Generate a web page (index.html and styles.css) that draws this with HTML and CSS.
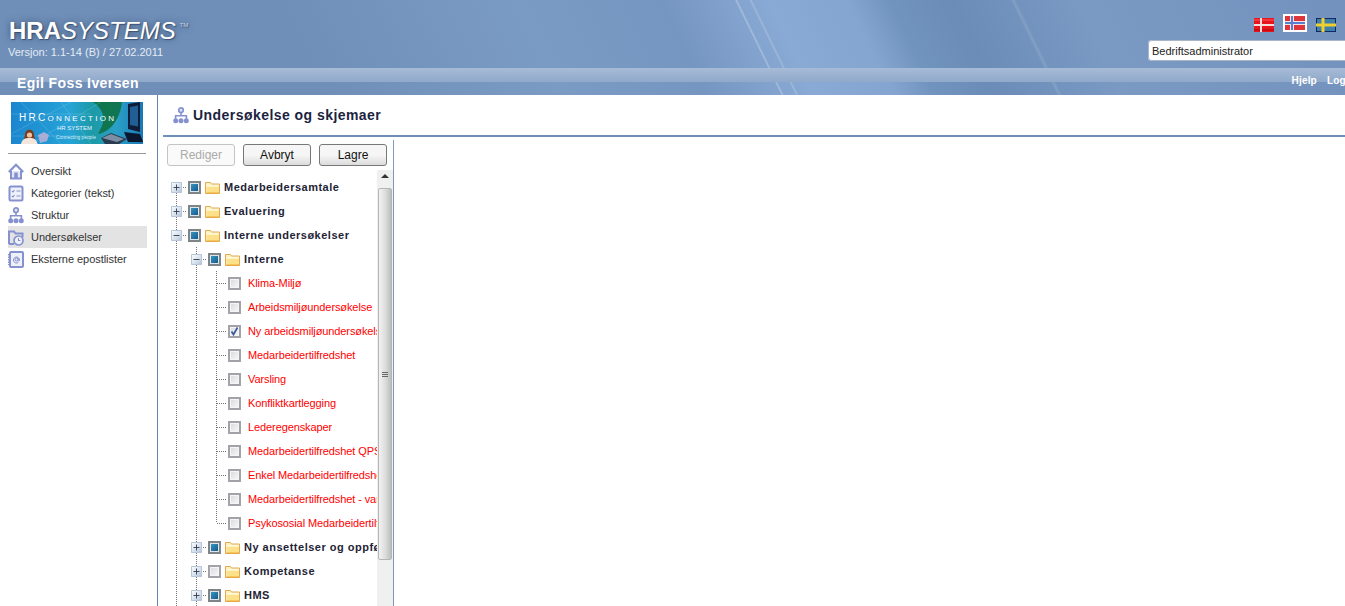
FILE: index.html
```html
<!DOCTYPE html>
<html lang="en">
<head>
  <meta charset="UTF-8">
  <meta name="viewport" content="width=device-width, initial-scale=1.0">
  <title>HRA Systems</title>
  <link rel="stylesheet" href="styles.css">
</head>
<body>
  <!-- shared icons -->
  <svg class="sprites" aria-hidden="true">
    <symbol id="i-org" viewBox="0 0 16 17">
      <circle cx="8" cy="3.200" r="2.300" fill="#dfe2f5" stroke="currentColor" stroke-width="1.700"/>
      <path d="M8 5.500V9M2.600 12V8.800h10.800V12" fill="none" stroke="currentColor" stroke-width="1.600"/>
      <circle cx="2.700" cy="13.800" r="2.500" fill="currentColor"/>
      <circle cx="8" cy="13.800" r="2.500" fill="currentColor"/>
      <circle cx="13.300" cy="13.800" r="2.500" fill="currentColor"/>
    </symbol>
    <symbol id="i-folder" viewBox="0 0 15 13">
      <path d="M.5 12.500V1.500h5l1 1.500h8v9.500z" fill="#fdf3c4" stroke="#e2a94e"/>
      <path d="M1.500 12V5.500h12.500V12z" fill="#fde08a"/>
      <path d="M1.500 5h12.500" stroke="#fffbe6"/>
      <path d="M1.500 11.500h12.500" stroke="#f7c65a"/>
    </symbol>
    <symbol id="i-plus" viewBox="0 0 11 11">
      <path d="M2.500 5.500h6M5.500 2.500v6" stroke="#3c4a5c" stroke-width="1"/>
    </symbol>
    <symbol id="i-minus" viewBox="0 0 11 11">
      <path d="M2.500 5.500h6" stroke="#3c4a5c" stroke-width="1"/>
    </symbol>
  </svg>

  <header class="header">
    <div class="topbar">
      <div class="brand">
        <div class="logo"><b>HRA</b><i>SYSTEMS</i><sup>TM</sup></div>
        <div class="version">Versjon: 1.1-14 (B) / 27.02.2011</div>
      </div>
      <div class="top-right">
        <div class="flags">
          <svg class="flag" viewBox="0 0 20 14"><rect width="20" height="14" fill="#e8141c"/><rect y="1" width="20" height="2" fill="#f4343a"/><rect y="11" width="20" height="2" fill="#c80c14"/><path d="M7 0v14M0 7h20" stroke="#f6dcdc" stroke-width="2"/></svg>
          <span class="flag-on"><svg class="flag" viewBox="0 0 20 14"><rect width="20" height="14" fill="#e0353a"/><path d="M7 0v14M0 7h20" stroke="#f0e6e6" stroke-width="4"/><path d="M7 0v14M0 7h20" stroke="#5a7fd0" stroke-width="2"/></svg></span>
          <svg class="flag" viewBox="0 0 20 14"><rect width="20" height="14" fill="#0d2a66"/><rect x="1" y="1" width="18" height="12" fill="#3f7fa8"/><path d="M7 0v14M0 7h20" stroke="#f0cf30" stroke-width="3"/></svg>
        </div>
        <div class="role-select">Bedriftsadministrator</div>
      </div>
    </div>
    <div class="band">
      <span class="user-name">Egil Foss Iversen</span>
      <nav class="band-nav"><span>Hjelp</span><span>Logg ut</span></nav>
    </div>
  </header>

  <div class="page">
    <aside class="sidebar">
      <svg class="banner" viewBox="0 0 132 42">
        <defs>
          <linearGradient id="bn" x1="0" x2="1" y1="0" y2="0">
            <stop offset="0" stop-color="#1b86cf"/>
            <stop offset=".45" stop-color="#27a3d6"/>
            <stop offset=".62" stop-color="#1c9aa6"/>
            <stop offset=".8" stop-color="#2aa0c8"/>
            <stop offset="1" stop-color="#1a78b4"/>
          </linearGradient>
        </defs>
        <rect width="132" height="42" fill="url(#bn)"/>
        <path d="M82 0c8 5 13 14 9 24l-4 8c12-2 22-14 24-32z" fill="#0c6f3c" opacity=".85"/>
        <path d="M0 32L60 0M20 42L90 0M10 0l40 42M50 0l30 42M0 12h80M0 34h80" stroke="#a9e2f6" stroke-width=".4" opacity=".55"/>
        <path d="M117 2l12-2v30l-12-3z" fill="#101c3a"/>
        <path d="M119 5l8-1.500v21l-8-1.500z" fill="#1f5f96"/>
        <path d="M113 30l16 2 3 8h-15z" fill="#0c1730"/>
        <path d="M90 36l10-5 16 6-8 5H94z" fill="#2b3b50"/>
        <path d="M91 36l9-4 13 5-7 3z" fill="#7c8ea3"/>
        <path d="M14 33c0-7 9-7 9 0l1 4h-11z" fill="#7a3b1e"/>
        <circle cx="18.500" cy="33" r="2.600" fill="#f0c4a2"/>
        <path d="M10 42c1-5 4-6 8.500-6s7 1 8 6z" fill="#f4e6dc"/>
        <path d="M27 33l6-3 5 3-2 6-7 2z" fill="#c7b3d6" opacity=".8"/>
        <text class="bn-title" x="8" y="19">HRC<tspan class="bn-small">ONNECTION</tspan></text>
        <text class="bn-sub" x="46" y="28">HR SYSTEM</text>
        <text class="bn-tag" x="45" y="37">Connecting people</text>
      </svg>
      <hr class="side-rule">
      <ul class="menu">
        <li class="menu-item">
          <svg class="menu-icon" viewBox="0 0 16 17"><path d="M3 8v7.500h10V8" fill="#e6e8f8" stroke="currentColor" stroke-width="2"/><path d="M.8 9L8 1.800 15.200 9" fill="none" stroke="currentColor" stroke-width="2.200"/><rect x="6.200" y="9.500" width="3.600" height="6" fill="currentColor"/></svg>
          Oversikt
        </li>
        <li class="menu-item">
          <svg class="menu-icon" viewBox="0 0 16 17"><rect x="1.500" y="1.500" width="13" height="14" rx="1.500" fill="#eef0fa" stroke="currentColor" stroke-width="2"/><path d="M4 6l1 1 1.500-2M4 11l1 1 1.500-2M8.500 6h4M8.500 11h4" fill="none" stroke="currentColor" stroke-width="1.100"/></svg>
          Kategorier (tekst)
        </li>
        <li class="menu-item">
          <svg class="menu-icon"><use href="#i-org"/></svg>
          Struktur
        </li>
        <li class="menu-item is-active">
          <svg class="menu-icon" viewBox="0 0 16 17"><path d="M1 15V2.500h5l1.500 2h7v4" fill="none" stroke="currentColor" stroke-width="2"/><path d="M1 15h5" stroke="currentColor" stroke-width="2"/><circle cx="10.500" cy="11.500" r="4.500" fill="#eef0fa" stroke="currentColor" stroke-width="1.700"/><path d="M10.500 9v2.500h2" fill="none" stroke="currentColor" stroke-width="1.100"/></svg>
          Undersøkelser
        </li>
        <li class="menu-item">
          <svg class="menu-icon" viewBox="0 0 16 17"><rect x="2" y="1" width="13" height="15" rx="1" fill="#eef0fa" stroke="currentColor" stroke-width="2"/><path d="M1 3v11" stroke="currentColor" stroke-width="2" stroke-dasharray="1.500 1"/><circle cx="8.500" cy="8.500" r="1.500" fill="none" stroke="currentColor"/><path d="M10 7v2.500c0 1 1.500 1 1.500-.5a3 3 0 1 0-1.300 2.500" fill="none" stroke="currentColor"/></svg>
          Eksterne epostlister
        </li>
      </ul>
    </aside>

    <main class="main">
      <h1 class="page-title">
        <svg class="title-icon"><use href="#i-org"/></svg>
        Undersøkelse og skjemaer
      </h1>
      <section class="panel">
        <div class="toolbar">
          <button class="btn" disabled>Rediger</button>
          <button class="btn">Avbryt</button>
          <button class="btn">Lagre</button>
        </div>
        <div class="panel-body">
          <div class="tree">
            <div class="row">
              <span class="g g-start"><span class="exp"><svg><use href="#i-plus"/></svg></span></span>
              <span class="chk chk-mixed"></span><svg class="folder"><use href="#i-folder"/></svg>
              <span class="lbl">Medarbeidersamtale</span>
            </div>
            <div class="row">
              <span class="g g-tee"><span class="exp"><svg><use href="#i-plus"/></svg></span></span>
              <span class="chk chk-mixed"></span><svg class="folder"><use href="#i-folder"/></svg>
              <span class="lbl">Evaluering</span>
            </div>
            <div class="row">
              <span class="g g-tee"><span class="exp"><svg><use href="#i-minus"/></svg></span></span>
              <span class="chk chk-mixed"></span><svg class="folder"><use href="#i-folder"/></svg>
              <span class="lbl">Interne undersøkelser</span>
            </div>
            <div class="row">
              <span class="g g-pipe"></span>
              <span class="g g-tee"><span class="exp"><svg><use href="#i-minus"/></svg></span></span>
              <span class="chk chk-mixed"></span><svg class="folder"><use href="#i-folder"/></svg>
              <span class="lbl">Interne</span>
            </div>
            <div class="row">
              <span class="g g-pipe"></span><span class="g g-pipe"></span><span class="g g-tee"></span>
              <span class="chk"></span><span class="leaf">Klima-Miljø</span>
            </div>
            <div class="row">
              <span class="g g-pipe"></span><span class="g g-pipe"></span><span class="g g-tee"></span>
              <span class="chk"></span><span class="leaf">Arbeidsmiljøundersøkelse</span>
            </div>
            <div class="row">
              <span class="g g-pipe"></span><span class="g g-pipe"></span><span class="g g-tee"></span>
              <span class="chk"><svg viewBox="0 0 13 13"><path d="M3.500 6.500l2 3 4-7" fill="none" stroke="#3f5f9c" stroke-width="1.800"/></svg></span>
              <span class="leaf">Ny arbeidsmiljøundersøkelse</span>
            </div>
            <div class="row">
              <span class="g g-pipe"></span><span class="g g-pipe"></span><span class="g g-tee"></span>
              <span class="chk"></span><span class="leaf">Medarbeidertilfredshet</span>
            </div>
            <div class="row">
              <span class="g g-pipe"></span><span class="g g-pipe"></span><span class="g g-tee"></span>
              <span class="chk"></span><span class="leaf">Varsling</span>
            </div>
            <div class="row">
              <span class="g g-pipe"></span><span class="g g-pipe"></span><span class="g g-tee"></span>
              <span class="chk"></span><span class="leaf">Konfliktkartlegging</span>
            </div>
            <div class="row">
              <span class="g g-pipe"></span><span class="g g-pipe"></span><span class="g g-tee"></span>
              <span class="chk"></span><span class="leaf">Lederegenskaper</span>
            </div>
            <div class="row">
              <span class="g g-pipe"></span><span class="g g-pipe"></span><span class="g g-tee"></span>
              <span class="chk"></span><span class="leaf">Medarbeidertilfredshet QPS</span>
            </div>
            <div class="row">
              <span class="g g-pipe"></span><span class="g g-pipe"></span><span class="g g-tee"></span>
              <span class="chk"></span><span class="leaf">Enkel Medarbeidertilfredshet</span>
            </div>
            <div class="row">
              <span class="g g-pipe"></span><span class="g g-pipe"></span><span class="g g-tee"></span>
              <span class="chk"></span><span class="leaf">Medarbeidertilfredshet - variant</span>
            </div>
            <div class="row">
              <span class="g g-pipe"></span><span class="g g-pipe"></span><span class="g g-end"></span>
              <span class="chk"></span><span class="leaf">Psykososial Medarbeidertilfredshet</span>
            </div>
            <div class="row">
              <span class="g g-pipe"></span>
              <span class="g g-tee"><span class="exp"><svg><use href="#i-plus"/></svg></span></span>
              <span class="chk chk-mixed"></span><svg class="folder"><use href="#i-folder"/></svg>
              <span class="lbl">Ny ansettelser og oppfølging</span>
            </div>
            <div class="row">
              <span class="g g-pipe"></span>
              <span class="g g-tee"><span class="exp"><svg><use href="#i-plus"/></svg></span></span>
              <span class="chk"></span><svg class="folder"><use href="#i-folder"/></svg>
              <span class="lbl">Kompetanse</span>
            </div>
            <div class="row">
              <span class="g g-pipe"></span>
              <span class="g g-tee"><span class="exp"><svg><use href="#i-plus"/></svg></span></span>
              <span class="chk chk-mixed"></span><svg class="folder"><use href="#i-folder"/></svg>
              <span class="lbl">HMS</span>
            </div>
          </div>
          <div class="scrollbar">
            <div class="scroll-up"></div>
            <div class="scroll-thumb"><span class="scroll-grip"></span></div>
          </div>
        </div>
      </section>
    </main>
  </div>
</body>
</html>
```

FILE: styles.css
```css
/* Base */
html, body {
  margin: 0;
  padding: 0;
  height: 100%;
  overflow: hidden;
  background: #fff;
  font-family: "Liberation Sans", Arial, sans-serif;
  font-size: 11px;
  color: #333;
}
.sprites {
  display: none;
}

/* Header */
.header {
  width: 100%;
  height: 95px;
  overflow: hidden;
  color: #fff;
  background:
    linear-gradient(64deg, transparent 702px, rgba(255,255,255,.28) 703px, transparent 705px, transparent 715px, rgba(255,255,255,.2) 716px, transparent 718px, transparent 950px, rgba(255,255,255,.12) 952px, transparent 955px),
    linear-gradient(64deg, #6f8fb9 291px, #7a9bc4 506px, #7596c0 635px, #8aaad6 732px, #84a5d0 804px, #7194bf 840px, #6a8cb7 894px, #7a9ac4 1011px, #7393be 1240px);
}
.topbar {
  display: flex;
  justify-content: space-between;
  width: 1400px;
  height: 68px;
}
.brand {
  padding: 20px 0 0 8px;
}
.logo {
  font-size: 24px;
  line-height: 22px;
  padding-left: 1px;
  text-shadow: 0 0 7px rgba(50,70,100,.8), 1px 1px 1px rgba(40,60,90,.7);
}
.logo sup {
  font-size: 6px;
  line-height: 0;
  vertical-align: 12px;
  margin-left: 4px;
  color: #c9d5e5;
}
.version {
  margin-top: 4px;
  color: #e4ebf4;
}
.top-right {
  width: 252px;
  padding-top: 14px;
}
.flags {
  display: flex;
  align-items: flex-end;
  gap: 9px;
  height: 18px;
  padding-left: 106px;
}
.flag {
  display: block;
  width: 20px;
  height: 14px;
}
.flag-on {
  background: #fff;
  padding: 2px;
}
.role-select {
  margin-top: 8px;
  height: 21px;
  line-height: 23px;
  padding-left: 4px;
  background: #fff;
  border-radius: 4px;
  color: #222;
  box-shadow: 0 0 0 1px #a9b6c8 inset;
}
.band {
  display: flex;
  justify-content: space-between;
  width: 1400px;
  height: 27px;
  background: linear-gradient(#a6bbd6, #90a9ca) no-repeat 0 0 / 100% 14px;
}
.user-name {
  padding: 7px 0 0 17px;
  font-size: 14px;
  font-weight: bold;
  letter-spacing: .4px;
}
.band-nav {
  display: flex;
  gap: 10px;
  padding: 7px 35px 0 0;
  font-size: 10px;
  font-weight: bold;
  letter-spacing: .2px;
}

/* Left menu */
.page {
  display: flex;
  height: 511px;
}
.sidebar {
  flex: none;
  width: 157px;
  border-right: 1px solid #6485b2;
}
.banner {
  display: block;
  width: 132px;
  height: 42px;
  margin: 7px 0 0 11px;
}
.bn-title {
  font-size: 10px;
  fill: #fff;
  letter-spacing: 2.300px;
}
.bn-small {
  font-size: 8px;
}
.bn-sub {
  font-size: 6px;
  fill: #e8f4fb;
}
.bn-tag {
  font-size: 4.800px;
  fill: #d4ecf8;
}
.side-rule {
  width: 138px;
  height: 1px;
  margin: 9px 0 6px 8px;
  border: 0;
  background: #999;
}
.menu {
  list-style: none;
  margin: 0;
  padding: 0 0 0 8px;
}
.menu-item {
  display: flex;
  align-items: center;
  gap: 7px;
  width: 139px;
  height: 22px;
  letter-spacing: -.05px;
  color: #333;
}
.menu-item.is-active {
  background: #e3e3e3;
}
.menu-icon {
  width: 16px;
  height: 17px;
  color: #8592cf;
}

/* Main column */
.main {
  flex: 1;
  padding-left: 5px;
  min-width: 0;
}
.page-title {
  display: flex;
  align-items: center;
  gap: 4px;
  height: 42px;
  margin: 0;
  padding-left: 10px;
  box-sizing: border-box;
  border-bottom: 2px solid #6f8fb9;
  font-size: 14px;
  font-weight: bold;
  letter-spacing: .45px;
  color: #1b2340;
}
.title-icon {
  width: 16px;
  height: 17px;
  color: #8592cf;
}
.panel {
  width: 230px;
  height: 469px;
  margin-top: 3px;
  border-right: 1px solid #7f9ac0;
}
.toolbar {
  display: flex;
  gap: 8px;
  height: 30px;
  padding: 4px 0 0 4px;
  box-sizing: border-box;
}
.btn {
  width: 68px;
  height: 22px;
  padding: 0;
  border: 1px solid #777;
  border-radius: 3px;
  background: linear-gradient(#f6f6f6 50%, #dcdcdc);
  font: 12px "Liberation Sans", Arial, sans-serif;
  color: #111;
}
.btn:disabled {
  border-color: #c4c4c4;
  background: #fafafa;
  color: #aaa;
}
.panel-body {
  display: flex;
  height: 439px;
}

/* Tree */
.tree {
  flex: none;
  width: 214px;
  padding: 5px 0 0 3px;
  box-sizing: border-box;
  overflow: hidden;
  white-space: nowrap;
}
.row {
  display: flex;
  align-items: center;
  height: 24px;
}
.g {
  flex: none;
  display: flex;
  align-items: center;
  align-self: stretch;
  width: 20px;
  padding-left: 5px;
  box-sizing: border-box;
  --dots-v: repeating-linear-gradient(#777 0 1px, transparent 1px 2px);
  --dots-h: repeating-linear-gradient(90deg, #777 0 1px, transparent 1px 2px);
}
.g-pipe {
  background: var(--dots-v) no-repeat 10px 0 / 1px 100%;
}
.g-tee {
  background: var(--dots-v) no-repeat 10px 0 / 1px 100%, var(--dots-h) no-repeat 11px 12px / 9px 1px;
}
.g-start {
  background: var(--dots-v) no-repeat 10px 12px / 1px 12px, var(--dots-h) no-repeat 11px 12px / 9px 1px;
}
.g-end {
  background: var(--dots-v) no-repeat 10px 0 / 1px 12px, var(--dots-h) no-repeat 11px 12px / 9px 1px;
}
.exp {
  display: block;
  width: 11px;
  height: 11px;
  margin-top: 1px;
  border-radius: 1px;
  background: linear-gradient(135deg, #fff, #d5e0ec 60%, #a9bdd3);
  box-shadow: 0 0 0 1px #b7c7d9 inset;
}
.exp svg {
  display: block;
  width: 11px;
  height: 11px;
}
.chk {
  flex: none;
  display: block;
  width: 13px;
  height: 13px;
  margin-left: 2px;
  box-sizing: border-box;
  border: 2px solid #a2a2a8;
  background: linear-gradient(135deg, #d8dade, #f8f8f8);
  box-shadow: 0 0 0 1px #f5f5f5 inset;
}
.chk svg {
  display: block;
  width: 13px;
  height: 13px;
  margin: -2px;
}
.chk-mixed {
  border-color: #7f8488;
  background: linear-gradient(135deg, #3f9cc6, #0c5488);
  box-shadow: 0 0 0 1px #dfe6ea inset;
}
.folder {
  flex: none;
  width: 15px;
  height: 13px;
  margin-left: 4px;
}
.lbl {
  margin-left: 4px;
  font-weight: bold;
  letter-spacing: .5px;
  color: #1e2436;
}
.leaf {
  margin-left: 7px;
  letter-spacing: -.1px;
  color: #f00;
}

/* Scrollbar */
.scrollbar {
  flex: none;
  width: 16px;
  background: #f0f0f0;
}
.scroll-up {
  height: 18px;
}
.scroll-up::after {
  content: "";
  display: block;
  width: 0;
  height: 0;
  margin: 0 auto;
  border: 4px solid transparent;
  border-top: 0;
  border-bottom-color: #333;
  transform: translateY(4px);
}
.scroll-thumb {
  display: flex;
  align-items: center;
  justify-content: center;
  height: 372px;
  margin: 0 1px;
  border: 1px solid #b5b5b5;
  border-radius: 2px;
  box-sizing: border-box;
  background: linear-gradient(90deg, #f2f2f2, #dedede 50%, #bdbdbd);
}
.scroll-grip {
  display: block;
  width: 6px;
  height: 5px;
  background: repeating-linear-gradient(#666 0 1px, transparent 1px 2px);
}
```
